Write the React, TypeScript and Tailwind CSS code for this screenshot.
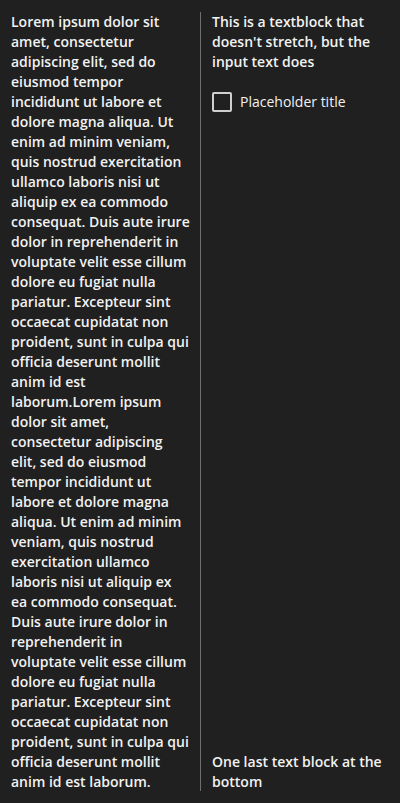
const lorem =
  "Lorem ipsum dolor sit amet, consectetur adipiscing elit, sed do eiusmod tempor incididunt ut labore et dolore magna aliqua. Ut enim ad minim veniam, quis nostrud exercitation ullamco laboris nisi ut aliquip ex ea commodo consequat. Duis aute irure dolor in reprehenderit in voluptate velit esse cillum dolore eu fugiat nulla pariatur. Excepteur sint occaecat cupidatat non proident, sunt in culpa qui officia deserunt mollit anim id est laborum.";

export default function App() {
  return (
    <div
      className="flex h-[803px] w-[400px] bg-[#202020] text-[14px] leading-[20px] font-semibold text-[#f2f2f2]"
      style={{ fontFamily: '"Open Sans", "Noto Sans", sans-serif' }}
    >
      <div className="w-[200px] shrink-0 pt-[12px] pl-[11px] pr-[10px]">
        <p className="break-words">
          {lorem}
          {lorem}
        </p>
      </div>

      <div className="my-[12px] w-px bg-[#6e6e6e]" />

      <div className="flex flex-1 flex-col justify-between pt-[12px] pb-[11px] pl-[11px] pr-[12px]">
        <div>
          <p>This is a textblock that doesn't stretch, but the input text does</p>
          <label className="mt-[20px] flex items-center gap-[8px]">
            <span className="size-[20px] rounded-[2px] border-2 border-[#cfcfcf]" />
            <span className="font-normal">Placeholder title</span>
          </label>
        </div>
        <p>One last text block at the bottom</p>
      </div>
    </div>
  );
}
